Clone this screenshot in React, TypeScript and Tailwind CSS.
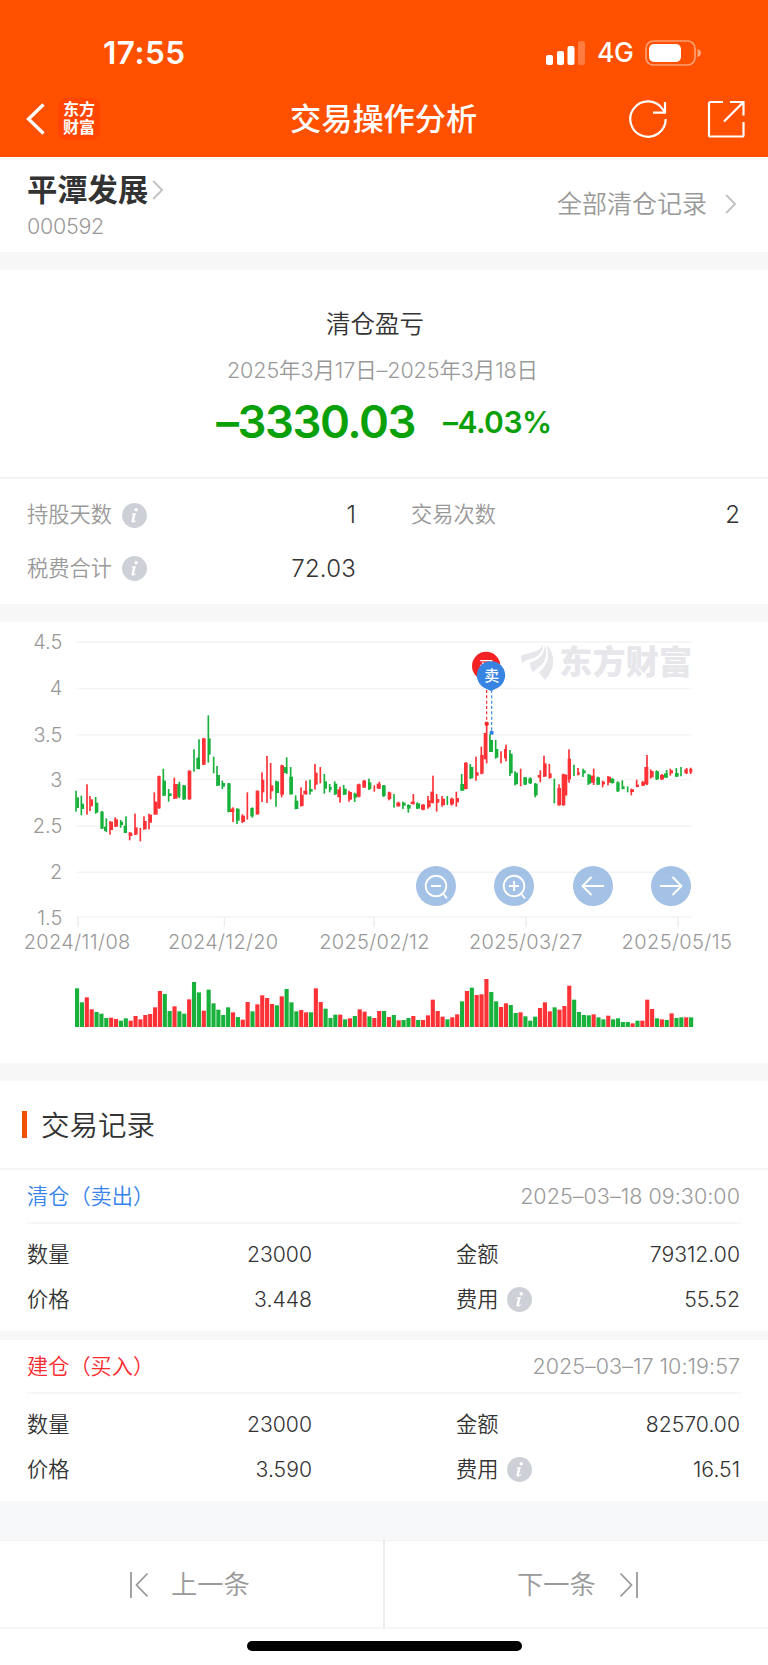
import React from "react";

// Each candle: colour, wick x, wick top, wick bottom, then optional body left, right, top, bottom.
type Candle = [string, number, number, number, number?, number?, number?, number?];

const candles: Candle[] = [
  ["g", 228, 512, 575, 230, 237, 532, 564],
  ["g", 244, 527, 586, 246, 252, 551, 567],
  ["r", 261, 493, 584],
  ["r", 270, 528, 573, 272, 279, 538, 559],
  ["g", 287, 531, 581, 288, 295, 548, 578],
  ["g", 306, 573, 627, 301, 311, 575, 626],
  ["g", 319, 595, 636, 312, 321, 620, 633],
  ["r", 330, 603, 644, 330, 339, 605, 630],
  ["r", 346, 592, 621, 343, 354, 598, 620],
  ["g", 362, 600, 623, 362, 369, 605, 615],
  ["g", 378, 589, 639, 371, 381, 617, 639],
  ["r", 389, 636, 661, 386, 397, 638, 648],
  ["r", 405, 581, 645, 404, 413, 622, 644],
  ["r", 421, 624, 664],
  ["r", 432, 589, 629, 430, 440, 603, 628],
  ["r", 447, 581, 628, 447, 456, 584, 608],
  ["r", 463, 517, 584, 463, 473, 545, 584],
  ["r", 477, 467, 566, 472, 482, 468, 565],
  ["g", 490, 446, 528, 488, 498, 482, 527],
  ["g", 506, 507, 545, 507, 515, 520, 528],
  ["r", 523, 473, 537, 520, 533, 492, 536],
  ["g", 538, 485, 534, 532, 541, 493, 530],
  ["g", 551, 495, 540, 547, 558, 496, 538],
  ["r", 568, 451, 539, 563, 574, 452, 538],
  ["g", 582, 388, 455],
  ["g", 597, 358, 448, 589, 600, 413, 447],
  ["r", 611, 354, 435, 606, 617, 355, 434],
  ["g", 625, 286, 428, 625, 632, 355, 404],
  ["g", 641, 410, 460],
  ["g", 651, 438, 498, 650, 660, 465, 497],
  ["g", 667, 482, 507, 667, 675, 489, 500],
  ["g", 686, 489, 577, 682, 692, 490, 576],
  ["r", 699, 562, 606, 690, 703, 566, 576],
  ["g", 711, 565, 612, 708, 719, 566, 602],
  ["r", 727, 583, 609, 724, 735, 587, 606],
  ["r", 742, 517, 599],
  ["g", 757, 562, 593, 751, 761, 564, 589],
  ["r", 772, 512, 584, 767, 778, 512, 583],
  ["r", 786, 457, 546, 785, 793, 479, 517],
  ["r", 801, 408, 549],
  ["r", 812, 429, 538, 812, 820, 496, 514],
  ["g", 828, 482, 560, 826, 837, 484, 519],
  ["r", 845, 434, 532, 841, 852, 436, 524],
  ["g", 860, 412, 462, 851, 862, 441, 459],
  ["g", 872, 441, 524, 868, 879, 470, 523],
  ["g", 887, 526, 568, 884, 895, 542, 567],
  ["r", 903, 502, 560, 900, 911, 524, 558],
  ["r", 918, 482, 524, 910, 922, 512, 523],
  ["g", 930, 479, 524, 928, 938, 507, 515],
  ["r", 945, 432, 509, 945, 953, 458, 494],
  ["r", 961, 441, 490],
  ["g", 973, 462, 521, 972, 981, 484, 506],
  ["g", 989, 492, 517, 988, 995, 501, 510],
  ["g", 1004, 484, 525, 1003, 1012, 491, 523],
  ["r", 1020, 500, 548, 1012, 1023, 508, 532],
  ["g", 1031, 495, 525, 1031, 1040, 506, 524],
  ["r", 1047, 512, 545, 1045, 1056, 516, 539],
  ["g", 1064, 518, 546, 1061, 1072, 521, 533],
  ["r", 1077, 491, 532, 1070, 1082, 493, 530],
  ["r", 1093, 480, 503, 1087, 1098, 482, 503],
  ["g", 1107, 476, 510, 1104, 1114, 487, 507],
  ["r", 1123, 496, 515],
  ["r", 1138, 485, 507, 1130, 1142, 491, 506],
  ["g", 1151, 495, 531, 1146, 1157, 496, 528],
  ["r", 1167, 515, 541, 1163, 1174, 517, 537],
  ["g", 1182, 522, 563],
  ["r", 1195, 545, 560, 1189, 1201, 548, 559],
  ["g", 1209, 545, 567, 1206, 1217, 548, 557],
  ["g", 1225, 553, 578, 1221, 1232, 555, 566],
  ["r", 1240, 522, 554, 1232, 1244, 545, 552],
  ["g", 1252, 547, 567, 1248, 1260, 550, 566],
  ["r", 1270, 552, 571, 1263, 1275, 554, 569],
  ["r", 1284, 528, 566, 1282, 1292, 541, 562],
  ["r", 1299, 467, 550, 1291, 1302, 515, 549],
  ["r", 1310, 522, 575, 1310, 1318, 537, 548],
  ["r", 1326, 528, 560, 1325, 1335, 536, 556],
  ["g", 1342, 528, 555],
  ["r", 1355, 533, 557, 1350, 1362, 536, 553],
  ["r", 1369, 515, 560, 1368, 1377, 534, 547],
  ["g", 1385, 462, 513, 1381, 1393, 492, 512],
  ["r", 1398, 427, 508, 1392, 1403, 428, 507],
  ["g", 1411, 432, 477, 1409, 1420, 441, 475],
  ["r", 1428, 410, 482, 1428, 1436, 457, 467],
  ["r", 1444, 380, 463, 1441, 1451, 405, 461],
  ["r", 1460, 310, 430, 1451, 1460, 339, 418],
  ["g", 1470, 342, 396, 1468, 1479, 360, 396],
  ["g", 1487, 360, 416, 1485, 1495, 387, 413],
  ["r", 1503, 394, 430],
  ["r", 1518, 374, 424, 1512, 1521, 387, 415],
  ["g", 1530, 390, 468, 1528, 1538, 401, 460],
  ["g", 1545, 454, 496, 1544, 1554, 458, 493],
  ["r", 1562, 446, 499],
  ["g", 1575, 471, 495, 1570, 1581, 472, 494],
  ["g", 1591, 472, 492, 1585, 1596, 475, 490],
  ["g", 1606, 489, 532, 1602, 1613, 491, 526],
  ["r", 1621, 451, 487, 1613, 1623, 465, 473],
  ["r", 1632, 407, 471, 1630, 1640, 430, 470],
  ["r", 1648, 432, 476, 1647, 1655, 460, 474],
  ["g", 1663, 476, 550],
  ["r", 1677, 493, 557, 1672, 1683, 504, 556],
  ["r", 1690, 461, 557, 1685, 1696, 463, 556],
  ["r", 1697, 464, 526, 1694, 1702, 464, 526],
  ["r", 1707, 388, 488, 1703, 1713, 416, 478],
  ["g", 1722, 434, 468],
  ["r", 1734, 444, 466, 1732, 1739, 456, 465],
  ["g", 1749, 446, 471, 1749, 1757, 451, 460],
  ["g", 1765, 462, 495, 1763, 1773, 464, 491],
  ["r", 1781, 446, 495, 1773, 1784, 467, 488],
  ["g", 1794, 470, 495, 1789, 1800, 472, 494],
  ["r", 1808, 482, 502, 1806, 1815, 485, 493],
  ["r", 1824, 468, 496, 1823, 1833, 470, 488],
  ["g", 1837, 474, 491, 1831, 1843, 477, 489],
  ["g", 1853, 484, 516, 1849, 1859, 487, 514],
  ["g", 1867, 481, 508, 1866, 1874, 499, 507],
  ["g", 1883, 499, 517],
  ["r", 1894, 506, 526, 1891, 1902, 508, 516],
  ["r", 1910, 479, 502, 1910, 1917, 494, 501],
  ["r", 1928, 483, 498, 1924, 1935, 486, 497],
  ["r", 1941, 405, 495, 1933, 1945, 441, 493],
  ["r", 1952, 448, 476, 1952, 1961, 453, 472],
  ["g", 1970, 451, 480, 1966, 1977, 454, 478],
  ["r", 1986, 462, 480, 1980, 1992, 465, 478],
  ["g", 2000, 450, 474, 1992, 2003, 460, 473],
  ["r", 2011, 446, 467, 2011, 2019, 451, 460],
  ["g", 2029, 444, 471, 2025, 2036, 459, 470],
  ["g", 2043, 441, 469],
  ["r", 2060, 444, 462, 2053, 2063, 448, 460],
  ["r", 2072, 443, 462, 2068, 2077, 447, 457],
];

const volumes =
  "g1105 g1147 r1132 r1168 g1176 g1181 g1194 r1193 r1197 g1202 g1195 r1202 r1188 r1198 r1185 r1182 r1162 r1113 g1122 g1173 r1159 g1174 g1181 r1138 g1086 g1117 r1172 g1109 g1150 g1169 g1185 g1162 r1177 g1191 r1199 r1146 g1174 r1153 r1126 r1134 r1152 g1156 r1129 g1107 g1147 g1174 r1170 r1177 g1177 r1105 r1146 g1166 g1194 g1184 r1184 g1198 r1195 g1188 r1168 r1175 g1189 r1194 r1173 g1173 r1191 g1185 r1201 g1200 g1194 r1188 g1200 r1200 r1186 r1139 r1173 r1190 g1198 r1192 r1183 g1144 r1113 g1103 r1125 r1123 r1077 g1116 g1144 r1161 r1150 g1155 g1179 r1177 g1189 g1202 g1190 r1164 r1147 r1174 g1162 r1169 r1158 r1097 g1139 g1176 g1185 g1186 r1183 g1192 g1198 r1187 g1198 g1195 g1206 g1206 r1210 g1202 r1202 r1139 r1167 g1195 r1198 g1200 r1180 g1194 g1192 r1192 g1192".split(
    " ",
  );

const fillOf = (c: string) => (c === "g" ? "#18b13c" : "#fd3236");

const gridLines: [number, string, number][] = [
  [66, "4.5", 88],
  [206, "4", 225],
  [345, "3.5", 365],
  [479, "3", 500],
  [618, "2.5", 640],
  [757, "2", 777],
  [891, "1.5", 914],
];

const dates: [string, number, number, number][] = [
  ["2024/11/08", 231, 320, 234],
  ["2024/12/20", 669, 330, 673],
  ["2025/02/12", 1123, 331, 1122],
  ["2025/03/27", 1577, 340, 1578],
  ["2025/05/15", 2030, 331, 2034],
];

function Info() {
  return (
    <svg className="size-[25px] shrink-0" viewBox="0 0 25 25">
      <circle cx="12.5" cy="12.5" r="12.5" fill="#cdd0d6" />
      <circle cx="14.2" cy="6.7" r="1.7" fill="#fff" />
      <path d="M9.6 10.6 L13.9 10.1 L12 17.6 Q11.8 18.7 14.3 17.3 L14.1 18.3 Q9 21.3 9.5 17.8 L11 11.5 L9.5 11.4 Z" fill="#fff" />
    </svg>
  );
}

function Chevron({ className }: { className: string }) {
  return (
    <svg className={className} viewBox="0 0 12 20" fill="none" stroke="#c4c4c4" strokeWidth="2">
      <path d="M1.2 1 L10 10 L1.2 19" />
    </svg>
  );
}

function Header() {
  return (
    <header className="h-[157px] shrink-0 bg-[#ff5000] text-white">
      <div className="flex h-[80px] items-center justify-between pt-[25px] pr-[66px] pl-[103px]">
        <span className="text-[31.500px] leading-none font-semibold tracking-[0.500px]">17:55</span>
        <div className="flex items-center">
          <svg className="h-[26px] w-[40px]" viewBox="0 0 40 26" fill="#fff">
            <rect x="0" y="15" width="7" height="10" rx="2" />
            <rect x="11" y="11" width="7" height="14" rx="2" />
            <rect x="21.500" y="6" width="7" height="19" rx="2" />
            <rect x="32" y="1" width="7" height="24" rx="2" opacity="0.25" />
          </svg>
          <span className="ml-[11px] w-[36px] text-[26.500px] leading-none font-medium tracking-[-0.500px]">4G</span>
          <svg className="ml-[12px] h-[26px] w-[57px]" viewBox="0 0 57 26" fill="none">
            <rect x="1" y="1" width="49" height="24" rx="7.500" stroke="#fff" strokeOpacity="0.45" strokeWidth="1.700" />
            <rect x="4" y="4" width="32" height="18" rx="5" fill="#fff" />
            <path d="M52.500 9 Q56 10 56 13 Q56 16 52.500 17Z" fill="#fff" fillOpacity="0.5" />
          </svg>
        </div>
      </div>
      <div className="flex h-[77px] items-center pr-[23px] pl-[26px]">
        <svg className="h-[32px] w-[19px]" viewBox="0 0 19 32" fill="none" stroke="#fff" strokeWidth="3.300">
          <path d="M17.500 1.500 L2.500 16 L17.500 30.500" />
        </svg>
        <div className="ml-[13px] flex size-[42px] flex-col items-center justify-center rounded-[9px] bg-[#ff4500] text-[16px] leading-[17.500px] font-bold">
          <span>东方</span>
          <span>财富</span>
        </div>
        <h1 className="ml-[190px] grow pt-[2px] text-[31.200px] leading-none font-medium">交易操作分析</h1>
        <svg className="h-[38px] w-[38px]" viewBox="0 0 38 38" fill="none" stroke="#fff" strokeWidth="2.200">
          <path d="M36.700 19 A17.700 17.700 0 1 1 34 9.700 L36 12.500" />
          <path d="M36 2 V12.600 H24" />
        </svg>
        <svg className="ml-[40px] h-[38px] w-[38px]" viewBox="0 0 38 38" fill="none" stroke="#fff" strokeWidth="2.200">
          <path d="M16 2 H3.500 Q2 2 2 3.500 V35 Q2 36.500 3.500 36.500 H35 Q36.500 36.500 36.500 35 V22" />
          <path d="M23 2 H36.500 V15.500 M36.500 2 L17 21.500" />
        </svg>
      </div>
    </header>
  );
}

function Chart() {
  return (
    <section className="relative h-[441px] shrink-0 bg-white">
      <svg className="block h-[441px] w-[768px]" viewBox="0 6 2304 1323">
        <g fill="#f4f4f4">
          {gridLines.map(([y]) => (
            <rect key={y} x="231" y={y - 2.5} width="1842" height="4.5" />
          ))}
        </g>
        <g fill="#999" className="text-[60px] font-[350]">
          {gridLines.map(([y, label, base]) => (
            <text key={y} x="187" y={base} textAnchor="end">
              {label}
            </text>
          ))}
          {dates.map(([d, x, w]) => (
            <text key={d} x={x - w / 2} y="988" textLength={w}>
              {d}
            </text>
          ))}
        </g>
        {dates.map(([d, , , x]) => (
          <rect key={d} x={x - 2} y="891" width="4" height="29" fill="#ececec" />
        ))}
        <g fill="#e6e6eb">
          <path d="M1564 106 C1590 98 1612 98 1630 75 C1628 96 1616 112 1592 117 C1578 120 1571 124 1568 130 C1564 122 1563 114 1564 106Z" />
          <path d="M1590 128 C1616 120 1632 104 1635 76 C1645 108 1636 128 1614 144 C1606 150 1602 153 1600 158 C1593 149 1590 139 1590 128Z" />
          <path d="M1640 76 C1654 88 1661 106 1659 132 C1656 153 1646 166 1636 180 C1628 172 1621 165 1617 157 C1640 138 1650 116 1640 76Z" />
          <text x="1678" y="163" textLength="398" className="text-[99px] font-black">
            东方财富
          </text>
        </g>
        {candles.map(([c, x, t, b, l, r, bt, bb], i) => (
          <g key={i} fill={fillOf(c)}>
            <rect x={x - 2.5} y={t} width="5" height={b - t} />
            {l !== undefined && <rect x={l} y={bt} width={r! - l} height={bb! - bt!} />}
          </g>
        ))}
        {volumes.map((v, i) => (
          <rect key={i} x={225 + i * 14.62} y={v.slice(1)} width="12.4" height={1221 - Number(v.slice(1))} fill={fillOf(v[0])} />
        ))}
        <path d="M1460 210 V310" stroke="#f5262b" strokeWidth="3.500" strokeDasharray="9 7" />
        <path d="M1475 210 V338" stroke="#3b87e4" strokeWidth="3.500" strokeDasharray="9 7" />
        <circle cx="1460" cy="311" r="6.500" fill="#f5262b" />
        <circle cx="1475" cy="338" r="6.500" fill="#3282e4" />
        <circle cx="1458.500" cy="138" r="42.500" fill="#f42222" />
        <text x="1458.500" y="155" textAnchor="middle" fill="#fff" className="text-[44px] font-medium">
          买
        </text>
        <path d="M1473 213 L1452 203 A42.500 42.500 0 1 1 1494 203 Z" fill="#3884e2" />
        <text x="1475" y="183" textAnchor="middle" fill="#fff" className="text-[45px] font-medium">
          卖
        </text>
      </svg>
      <div className="absolute top-[244px] left-[415.700px] flex gap-[38.500px]">
        {["minus", "plus", "left", "right"].map((k) => (
          <button key={k} className="size-[40px] rounded-full bg-[#7da8da]/70">
            <svg viewBox="0 0 40 40" fill="none" stroke="#fff" strokeWidth="1.900" className="size-[40px]">
              {(k === "minus" || k === "plus") && (
                <>
                  <circle cx="20" cy="20" r="10.300" />
                  <path d="M15 20 H25 M26.500 28.500 L28 27 M27 27.500 L31 32.500" />
                </>
              )}
              {k === "plus" && <path d="M20 15 V25" />}
              {k === "left" && <path d="M31 20 H9.500 M18.500 11 L9.500 20 L18.500 29" />}
              {k === "right" && <path d="M9 20 H30.500 M21.500 11 L30.500 20 L21.500 29" />}
            </svg>
          </button>
        ))}
      </div>
    </section>
  );
}

interface RecordProps {
  kind: string;
  tone: string;
  time: string;
  qty: string;
  amount: string;
  price: string;
  fee: string;
}

function TradeRecord({ kind, tone, time, qty, amount, price, fee }: RecordProps) {
  return (
    <article className="shrink-0 bg-white px-[27px] text-[21.200px] leading-none font-[350] text-[#333]">
      <div className="flex h-[54px] items-center justify-between border-b-2 border-[#f6f6f6] pt-[2px]">
        <span className={tone}>{kind}</span>
        <span className="pr-px text-[21.500px] tracking-[0.040px] text-[#999]">{time}</span>
      </div>
      <div className="flex h-[107px] flex-col pt-[9px]">
        <div className="flex h-[44px] items-center">
          <span className="w-[120px]">数量</span>
          <span className="w-[165px] text-right">{qty}</span>
          <span className="ml-[144px]">金额</span>
          <span className="grow pr-px text-right">{amount}</span>
        </div>
        <div className="flex h-[45px] items-center">
          <span className="w-[120px]">价格</span>
          <span className="w-[165px] text-right">{price}</span>
          <span className="mr-[9px] ml-[144px]">费用</span>
          <Info />
          <span className="grow pr-px text-right">{fee}</span>
        </div>
      </div>
    </article>
  );
}

export default function App() {
  return (
    <div className="flex h-[1665px] w-[768px] flex-col overflow-hidden bg-[#f7f7f7] font-['Inter','Noto_Sans_CJK_SC',sans-serif]">
      <Header />
      <section className="flex h-[95px] shrink-0 items-center justify-between bg-white pr-[31px] pl-[27px]">
        <div className="flex flex-col">
          <div className="flex h-[42px] items-center pt-px text-[30.300px] leading-none font-bold text-[#333]">
            平潭发展
            <Chevron className="ml-[4px] h-[20px] w-[12px]" />
          </div>
          <span className="text-[21.500px] leading-[30px] font-[350] tracking-[-0.300px] text-[#999]">000592</span>
        </div>
        <div className="flex items-center pb-px text-[25px] leading-none font-[350] text-[#999]">
          全部清仓记录
          <Chevron className="ml-[18px] h-[20px] w-[12px]" />
        </div>
      </section>
      <section className="mt-[18px] flex h-[209px] shrink-0 flex-col items-center border-b-2 border-[#f3f3f3] bg-white pt-[36px]">
        <h2 className="pr-[18px] text-[24.500px] leading-[36px] font-[350] text-[#333]">清仓盈亏</h2>
        <p className="mt-[12px] pr-[3px] text-[21.500px] leading-[32px] font-[350] tracking-[-0.080px] text-[#999]">
          2025年3月17日–2025年3月18日
        </p>
        <div className="mt-[8px] flex h-[56px] items-center leading-none font-semibold text-[#0aa00a]">
          <span className="text-[45.500px] tracking-[-1.500px]">–3330.03</span>
          <span className="ml-[28px] text-[30px] tracking-[-0.500px]">–4.03%</span>
        </div>
      </section>
      <section className="grid h-[125px] shrink-0 grid-cols-[329px_329px] grid-rows-[54px_53px] gap-x-[55px] bg-white px-[27px] pt-[9px] text-[21.250px] leading-none font-[350] text-[#333]">
        <div className="flex items-center">
          <span className="mr-[9.500px] text-[#999]">持股天数</span>
          <Info />
          <span className="grow text-right text-[24px]">1</span>
        </div>
        <div className="flex items-center">
          <span className="text-[#999]">交易次数</span>
          <span className="grow text-right text-[24px]">2</span>
        </div>
        <div className="flex items-center">
          <span className="mr-[9.500px] text-[#999]">税费合计</span>
          <Info />
          <span className="grow text-right text-[24px] tracking-[0.200px]">72.03</span>
        </div>
      </section>
      <div className="h-[18px] shrink-0" />
      <Chart />
      <section className="mt-[18px] flex h-[89px] shrink-0 items-center border-b-2 border-[#f6f6f6] bg-white pl-[21.500px]">
        <span className="h-[27px] w-[5.500px] bg-[#f25200]" />
        <h2 className="ml-[14px] pt-[3px] text-[28.500px] leading-none font-[350] text-[#333]">交易记录</h2>
      </section>
      <TradeRecord
        kind="清仓（卖出）"
        tone="text-[#3584eb]"
        time="2025–03–18 09:30:00"
        qty="23000"
        amount="79312.00"
        price="3.448"
        fee="55.52"
      />
      <div className="h-[9px] shrink-0" />
      <TradeRecord
        kind="建仓（买入）"
        tone="text-[#fb2b2f]"
        time="2025–03–17 10:19:57"
        qty="23000"
        amount="82570.00"
        price="3.590"
        fee="16.51"
      />
      <div className="h-[40px] shrink-0 border-b border-[#f0f0f0] bg-[#f7f8fa]" />
      <nav className="flex h-[88px] shrink-0 border-b-2 border-[#f5f5f5] bg-white text-[26.300px] leading-none font-[350] text-[#999]">
        <button className="flex w-[385px] items-center border-r-2 border-[#ececec] pt-[2px] pl-[129px]">
          <svg className="mr-[22px] h-[26px] w-[20px]" viewBox="0 0 20 26" fill="none" stroke="#999" strokeWidth="1.800">
            <path d="M2 0 V26 M18.500 1.500 L7.500 13 L18.500 24.500" />
          </svg>
          上一条
        </button>
        <button className="flex items-center pt-[2px] pl-[132px]">
          下一条
          <svg className="ml-[23px] h-[26px] w-[20px]" viewBox="0 0 20 26" fill="none" stroke="#999" strokeWidth="1.800">
            <path d="M18 0 V26 M1.500 1.500 L12.500 13 L1.500 24.500" />
          </svg>
        </button>
      </nav>
      <div className="flex h-[36px] shrink-0 justify-center bg-white pt-[12px]">
        <span className="h-[9.500px] w-[275px] rounded-full bg-black" />
      </div>
    </div>
  );
}
